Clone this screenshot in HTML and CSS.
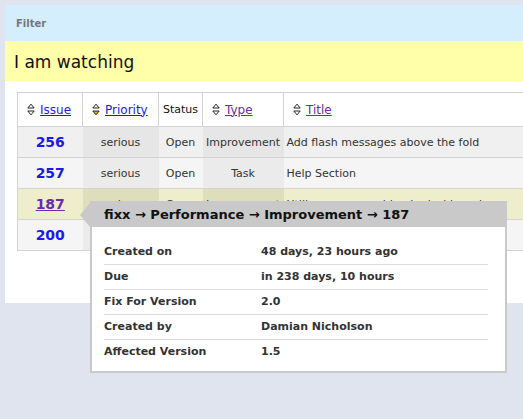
FILE: index.html
```html
<html>
<head>
	<link rel="stylesheet" href="styles.css">
	<title>I am watching</title>
</head>
<body>
	<div id="page">
		<div id="filter">Filter</div>
		<h1 id="watching">I am watching</h1>

		<div id="listing">
			<table id="issues">
				<colgroup>
					<col class="c-issue"><col class="c-priority"><col class="c-status"><col class="c-type"><col class="c-title">
				</colgroup>
				<tr>
					<th><span class="sorter"><svg width="8" height="13" viewBox="0 0 8 13"><path d="M4 1.2 L7.2 5 H0.8 Z" fill="none" stroke="#222" stroke-width="1"/><path d="M4 11.8 L7.2 8 H0.8 Z" fill="none" stroke="#222" stroke-width="1"/></svg></span><a href="#">Issue</a></th>
					<th><span class="sorter"><svg width="8" height="13" viewBox="0 0 8 13"><path d="M4 1.2 L7.2 5 H0.8 Z" fill="none" stroke="#222" stroke-width="1"/><path d="M4 11.8 L7.2 8 H0.8 Z" fill="#f2b400" stroke="#222" stroke-width="1"/></svg></span><a href="#">Priority</a></th>
					<th class="plain">Status</th>
					<th><span class="sorter"><svg width="8" height="13" viewBox="0 0 8 13"><path d="M4 1.2 L7.2 5 H0.8 Z" fill="none" stroke="#222" stroke-width="1"/><path d="M4 11.8 L7.2 8 H0.8 Z" fill="none" stroke="#222" stroke-width="1"/></svg></span><a href="#" class="visited">Type</a></th>
					<th><span class="sorter"><svg width="8" height="13" viewBox="0 0 8 13"><path d="M4 1.2 L7.2 5 H0.8 Z" fill="none" stroke="#222" stroke-width="1"/><path d="M4 11.8 L7.2 8 H0.8 Z" fill="none" stroke="#222" stroke-width="1"/></svg></span><a href="#" class="visited">Title</a></th>
				</tr>
				<tr class="odd">
					<td class="num"><a href="#">256</a></td>
					<td class="dark">serious</td>
					<td>Open</td>
					<td class="dark">Improvement</td>
					<td class="title">Add flash messages above the fold</td>
				</tr>
				<tr class="even">
					<td class="num"><a href="#">257</a></td>
					<td class="dark">serious</td>
					<td>Open</td>
					<td class="dark">Task</td>
					<td class="title">Help Section</td>
				</tr>
				<tr class="hover">
					<td class="num"><a href="#" class="visited">187</a></td>
					<td class="dark">serious</td>
					<td>Open</td>
					<td class="dark">Improvement</td>
					<td class="title">Utilize proper caching in dashboard</td>
				</tr>
				<tr class="even">
					<td class="num"><a href="#">200</a></td>
					<td class="dark">minor</td>
					<td>Open</td>
					<td class="dark">Task</td>
					<td class="title">Export reports as CSV</td>
				</tr>
			</table>
		</div>
	</div>

	<div id="tooltip">
		<div id="tipheader">fixx &rarr; Performance &rarr; Improvement &rarr; 187</div>
		<div id="tipbody">
			<div class="tiprow"><span class="tiplabel">Created on</span><span>48 days, 23 hours ago</span></div>
			<div class="tiprow"><span class="tiplabel">Due</span><span>in 238 days, 10 hours</span></div>
			<div class="tiprow"><span class="tiplabel">Fix For Version</span><span>2.0</span></div>
			<div class="tiprow"><span class="tiplabel">Created by</span><span>Damian Nicholson</span></div>
			<div class="tiprow last"><span class="tiplabel">Affected Version</span><span>1.5</span></div>
		</div>
	</div>
</body>
</html>
```

FILE: styles.css
```css
html{
	background-color: #dfe4ef;
	overflow: hidden;
}
body{
	margin: 0;
	padding: 5px 0 0 5px;
	font-family: 'DejaVu Sans', sans-serif;
	color: #222;
}
#page{
	background-color: #fff;
	width: 600px;
	padding-bottom: 52px;
}
#filter{
	background-color: #d4eefe;
	color: #777;
	font-size: 10px;
	font-weight: bold;
	height: 36px;
	line-height: 38px;
	padding-left: 11px;
}
#watching{
	background-color: #ffffaa;
	font-size: 17px;
	font-weight: normal;
	margin: 0;
	height: 40px;
	line-height: 42px;
	padding-left: 9px;
	color: #111;
}
#listing{
	padding: 11px 0 0 12px;
}
#issues{
	border-collapse: collapse;
	table-layout: fixed;
	font-size: 11px;
	width: 566px;
}
.c-issue{ width: 65px; }
.c-priority{ width: 76px; }
.c-status{ width: 44px; }
.c-type{ width: 81px; }
.c-title{ width: 300px; }
#issues th{
	height: 34px;
	font-weight: normal;
	text-align: left;
	padding: 0 0 0 9px;
	border: 1px solid #d3d3d3;
	white-space: nowrap;
	color: #111;
}
#issues th.plain{
	padding-left: 4px;
}
#issues th a{
	color: #1a1aee;
	font-size: 12px;
}
#issues th a.visited{
	color: #6a2ca8;
}
.sorter{
	display: inline-block;
	vertical-align: -2px;
	margin-right: 5px;
}
#issues td{
	height: 31px;
	text-align: center;
	padding: 0;
	border-top: 1px solid #d3d3d3;
	border-bottom: 1px solid #d3d3d3;
	white-space: nowrap;
	overflow: hidden;
	color: #333;
}
#issues td.num{
	border-left: 1px solid #d3d3d3;
	font-size: 14px;
	font-weight: bold;
}
#issues td.num a{
	color: #1a1aee;
	text-decoration: none;
}
#issues td.num a.visited{
	color: #6a2ca8;
	text-decoration: underline;
}
#issues td.title{
	text-align: left;
	padding-left: 3px;
}
tr.odd td{
	background-color: #f0f0f0;
}
tr.odd td.dark{
	background-color: #e6e6e6;
}
tr.even td{
	background-color: #f5f5f5;
}
tr.even td.dark{
	background-color: #ebebeb;
}
tr.hover td{
	background-color: #eeeecd;
}
tr.hover td.dark{
	background-color: #dedebc;
}
#tooltip{
	position: absolute;
	left: 90px;
	top: 201px;
	width: 417px;
	font-size: 11px;
	font-weight: bold;
	color: #333;
}
#tooltip:before{
	content: '';
	position: absolute;
	left: -10px;
	top: 2px;
	border-top: 12px solid transparent;
	border-bottom: 12px solid transparent;
	border-right: 10px solid #c9c9c9;
}
#tipheader{
	background-color: #c9c9c9;
	height: 26px;
	line-height: 28px;
	padding-left: 14px;
	font-size: 13px;
	color: #111;
}
#tipbody{
	background-color: #fff;
	border: 2px solid #c9c9c9;
	border-top: 0;
	padding: 13px 17px 7px 12px;
}
.tiprow{
	display: flex;
	height: 24px;
	line-height: 24px;
	border-bottom: 1px solid #dcdcdc;
}
.tiprow.last{
	border-bottom: 0;
}
.tiplabel{
	width: 157px;
}
```
